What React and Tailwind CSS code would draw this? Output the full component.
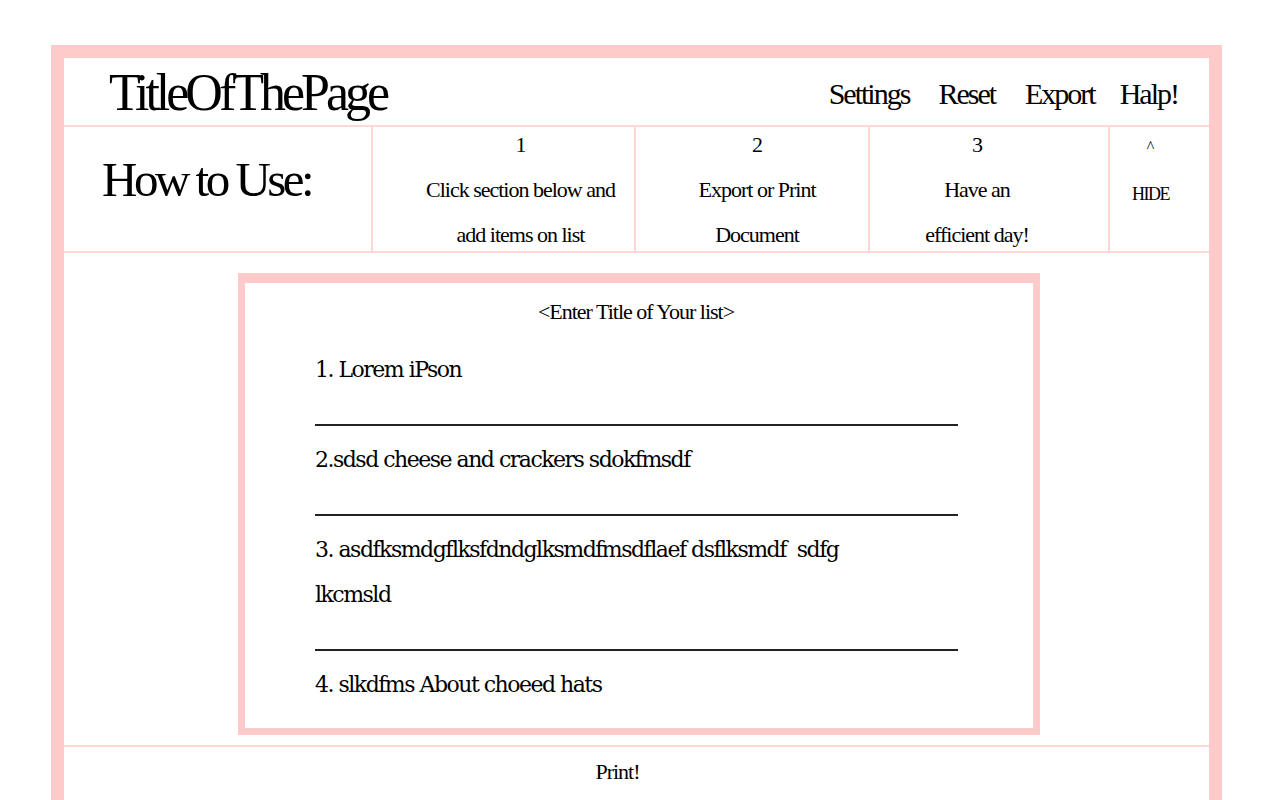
import React from "react";

const serif = { fontFamily: '"Liberation Serif", "Times New Roman", serif' };
const wide = { fontFamily: '"DejaVu Serif", "Liberation Serif", serif' };

const steps = [
  { n: "1", lines: ["Click section below and", "add items on list"], cls: "w-[263px] pl-[34px]" },
  { n: "2", lines: ["Export or Print", "Document"], cls: "w-[234px] pl-[10px]" },
  { n: "3", lines: ["Have an", "efficient day!"], cls: "w-[240px] pr-[24px]" },
];

const items = [
  ["1. Lorem iPson"],
  ["2.sdsd cheese and crackers sdokfmsdf"],
  ["3. asdfksmdgflksfdndglksmdfmsdflaef dsflksmdf  sdfg", "lkcmsld"],
];

function Rule() {
  return (
    <div className="h-[45px] pt-[32px]">
      <div className="w-[643px] h-[2px] bg-[#222]" />
    </div>
  );
}

export default function App() {
  return (
    <div className="min-h-screen bg-white pt-[45px] pl-[51px] text-black" style={serif}>
      <div className="w-[1171px] border-[13px] border-b-0 border-[#ffcaca] bg-white">
        {/* header */}
        <div className="h-[69px] flex items-start justify-between border-b-2 border-[#ffd7d7] pl-[45px] pr-[31px]">
          <h1 className="text-[52px] leading-none tracking-[-4px] mt-[9px]">TitleOfThePage</h1>
          <nav className="flex text-[30px] tracking-[-2px] mt-[13px]">
            <span>Settings</span>
            <span className="ml-[29px]">Reset</span>
            <span className="ml-[30px]">Export</span>
            <span className="ml-[25px]">Halp!</span>
          </nav>
        </div>

        {/* how to use */}
        <div className="flex h-[126px] border-b-2 border-[#ffd7d7]">
          <div className="w-[309px] border-r-2 border-[#ffd7d7] pl-[38px] pt-[28px]">
            <h2 className="text-[49px] leading-none tracking-[-3.5px]">How to Use:</h2>
          </div>
          {steps.map((s) => (
            <div key={s.n} className={`${s.cls} border-r-2 border-[#ffd7d7] text-center text-[22px] leading-[45px] tracking-[-1px]`}>
              <div className="-mt-[5px]">{s.n}</div>
              {s.lines.map((l) => (
                <div key={l}>{l}</div>
              ))}
            </div>
          ))}
          <div className="flex-1 text-center pt-[10px] pr-[18px]">
            <div className="text-[16px] leading-[20px]">^</div>
            <div className="text-[18px] tracking-[-1.5px] mt-[24px]">HIDE</div>
          </div>
        </div>

        {/* list */}
        <div className="h-[492px] pt-[20px] pl-[174px]">
          <div className="w-[802px] h-[462px] border-[7px] border-t-[10px] border-[#ffcaca] pl-[70px]">
            <div className="text-center text-[22px] tracking-[-1px] pt-[12px] pr-[76px]">
              &lt;Enter Title of Your list&gt;
            </div>
            <div className="mt-[19px] text-[22px] leading-[45px] tracking-[-1.5px]" style={wide}>
              {items.map((it, i) => (
                <div key={i}>
                  {it.map((l) => (
                    <div key={l} className="whitespace-pre">{l}</div>
                  ))}
                  <Rule />
                </div>
              ))}
              <div>4. slkdfms About choeed hats</div>
            </div>
          </div>
        </div>

        {/* footer */}
        <div className="h-[55px] border-t-2 border-[#ffd7d7] flex justify-center pr-[38px] pt-[8px]">
          <span className="text-[22px] tracking-[-1px]">Print!</span>
        </div>
      </div>
    </div>
  );
}
